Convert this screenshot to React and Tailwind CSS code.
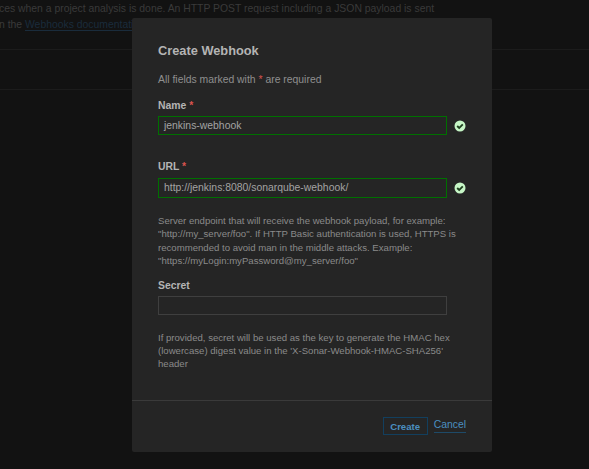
import React from 'react';

function CheckIcon() {
    return (
        <svg className="w-[12px] h-[12px] shrink-0" viewBox="0 0 12 12">
            <circle cx="6" cy="6" r="5.5" fill="#c6f6c6" />
            <path d="M3.2 6l2 2 3.6-3.6" fill="none" stroke="#1f3f1f" strokeWidth="1.8" />
        </svg>
    );
}

function Req() {
    return <span className="text-[#d9534f]">*</span>;
}

function App() {
    return (
        <div className="relative w-[589px] h-[469px] overflow-hidden bg-[#121212] font-['Liberation_Sans',Arial,sans-serif] text-[10.4px] leading-[16px]">
            <div className="text-[#3a3a3a]">
                <div className="pt-px h-[49px] whitespace-nowrap">
                    <p className="ml-[-1px] h-[16px]">ces when a project analysis is done. An HTTP POST request including a JSON payload is sent</p>
                    <p className="ml-[-1px]">n the <span className="text-[#1a2c3c] border-b border-[#1a2c3c]">Webhooks documentation</span></p>
                </div>
                <div className="h-[40px] border-t border-[#1c1c1c]"></div>
                <div className="border-t border-[#1c1c1c]"></div>
            </div>

            <div className="absolute left-[132px] top-[18px] w-[360px] h-[434px] bg-[#252525] rounded-[2px] flex flex-col">
                <div className="px-[26px] pt-[24px] flex-1">
                    <h2 className="text-[12.8px] leading-[18px] font-bold text-[#b4b4b4]">Create Webhook</h2>
                    <p className="mt-[12px] text-[#8f8f8f]">All fields marked with <Req /> are required</p>

                    <label className="block mt-[10px] font-bold text-[#b4b4b4]">Name <Req /></label>
                    <div className="mt-[2px] flex items-center gap-[7px]">
                        <div className="w-[289px] h-[19px] shrink-0 border border-[#007000] pl-[5px] leading-[17px] text-[#a3a3a3]">jenkins-webhook</div>
                        <CheckIcon />
                    </div>

                    <label className="block mt-[24px] font-bold text-[#b4b4b4]">URL <Req /></label>
                    <div className="mt-[3px] flex items-center gap-[7px]">
                        <div className="w-[289px] h-[20px] shrink-0 border border-[#007000] pl-[5px] leading-[17px] text-[#a3a3a3]">http://jenkins:8080/sonarqube-webhook/</div>
                        <CheckIcon />
                    </div>

                    <p className="mt-[16px] w-[310px] text-[9.6px] leading-[13.4px] text-[#8a8a8a]">
                        Server endpoint that will receive the webhook payload, for example: "http://my_server/foo". If HTTP Basic authentication is used, HTTPS is recommended to avoid man in the middle attacks. Example: "https://myLogin:myPassword@my_server/foo"
                    </p>

                    <label className="block mt-[10px] font-bold text-[#b4b4b4]">Secret</label>
                    <div className="mt-[2px] w-[289px] h-[19px] border border-[#3f3f3f]"></div>

                    <p className="mt-[16px] w-[310px] text-[9.6px] leading-[13.4px] text-[#8a8a8a]">
                        If provided, secret will be used as the key to generate the HMAC hex (lowercase) digest value in the 'X-Sonar-Webhook-HMAC-SHA256' header
                    </p>
                </div>

                <div className="h-[52px] border-t border-[#3a3a3a] flex justify-end items-start pt-[16px] pr-[26px] gap-[6px]">
                    <button className="w-[45px] h-[18px] border border-[#123f5e] text-[9.6px] leading-[17px] font-bold text-[#4b8fc0]">Create</button>
                    <a className="text-[#4b8fc0] leading-[15px] border-b border-[#1e4a68]">Cancel</a>
                </div>
            </div>
        </div>
    );
}

export default App;
